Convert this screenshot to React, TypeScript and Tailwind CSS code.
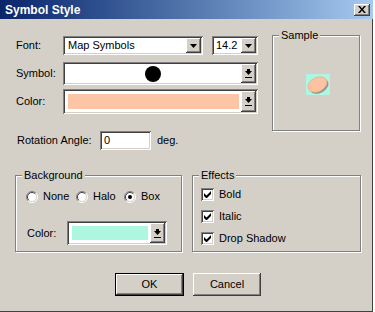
import type { ReactNode } from 'react'

const sunken = 'shadow-[inset_1px_1px_0_#808080,inset_-1px_-1px_0_#ffffff,inset_2px_2px_0_#404040,inset_-2px_-2px_0_#d4d0c8]'
const raised = 'shadow-[inset_-1px_-1px_0_#404040,inset_1px_1px_0_#ffffff,inset_-2px_-2px_0_#808080,inset_2px_2px_0_#d4d0c8]'
const etched = 'border border-[#808080] shadow-[inset_1px_1px_0_#ffffff,1px_1px_0_#ffffff]'

function DropButton({ bar = false }: { bar?: boolean }) {
  return (
    <div className={`flex h-full w-[15px] shrink-0 items-center justify-center bg-[#d4d0c8] ${raised}`}>
      {bar ? (
        <svg width="7" height="9" viewBox="0 0 7 9">
          <rect x="2" y="0" width="3" height="2" />
          <path d="M0 2h7L3.5 6z" />
          <rect x="0" y="8" width="7" height="1" />
        </svg>
      ) : (
        <svg width="7" height="4" viewBox="0 0 7 4">
          <path d="M0 0h7L3.5 4z" />
        </svg>
      )}
    </div>
  )
}

function ColorField({ color, width, height }: { color: string; width: string; height: string }) {
  return (
    <div className={`flex bg-white p-[2px] ${sunken} ${width} ${height}`}>
      <div className="flex-1 py-[3px] pl-[3px] pr-[2px]">
        <div className={`h-full ${color}`} />
      </div>
      <DropButton bar />
    </div>
  )
}

function Radio({ checked = false }: { checked?: boolean }) {
  return (
    <svg width="12" height="12" viewBox="0 0 12 12" className="shrink-0">
      <circle cx="6" cy="6" r="5" fill="#ffffff" />
      <path d="M2.1 9.9A5.5 5.5 0 0 1 9.9 2.1" fill="none" stroke="#808080" />
      <path d="M9.9 2.1A5.5 5.5 0 0 1 2.1 9.9" fill="none" stroke="#ffffff" />
      <path d="M2.8 9.2A4.5 4.5 0 0 1 9.2 2.8" fill="none" stroke="#404040" />
      <path d="M9.2 2.8A4.5 4.5 0 0 1 2.8 9.2" fill="none" stroke="#d4d0c8" />
      {checked && <circle cx="6" cy="6" r="2" fill="#000000" />}
    </svg>
  )
}

function Check({ label }: { label: string }) {
  return (
    <div className="flex h-[13px] items-center">
      <div className={`flex h-[13px] w-[13px] items-center justify-center bg-white ${sunken}`}>
        <svg width="7" height="7" viewBox="0 0 7 7">
          <path d="M0 2v3l2 2h1l4-4V0L2.5 4.5z" />
        </svg>
      </div>
      <span className="ml-[5px]">{label}</span>
    </div>
  )
}

function Group({ title, className, children }: { title: string; className: string; children: ReactNode }) {
  return (
    <fieldset className={`${etched} ${className}`}>
      <legend className="ml-[6px] bg-[#d4d0c8] px-[2px] leading-[13px]">{title}</legend>
      {children}
    </fieldset>
  )
}

function Button({ label, primary = false }: { label: string; primary?: boolean }) {
  return (
    <div className={`h-[23px] ${primary ? 'w-[69px] border border-black' : 'w-[68px]'}`}>
      <div className={`flex h-full items-center justify-center bg-[#d4d0c8] ${raised}`}>{label}</div>
    </div>
  )
}

export default function App() {
  return (
    <div className="h-[312px] w-[375px] bg-white">
      <div className="flex h-[312px] w-[373px] flex-col bg-[#d4d0c8] font-['Liberation_Sans',Arial,sans-serif] text-[11px] text-black shadow-[inset_-1px_-1px_0_#404040]">
        <div className="flex h-[19px] shrink-0 items-center bg-linear-to-r from-[#0a246a] to-[#a6caf0] pl-[5px] pr-[3px]">
          <span className="flex-1 text-[12px] font-bold text-white">Symbol Style</span>
          <div className={`flex h-[12px] w-[16px] items-center justify-center bg-[#d4d0c8] ${raised}`}>
            <svg width="8" height="7" viewBox="0 0 8 7">
              <path d="M0 0h2l2 2.5L6 0h2L5 3.5 8 7H6L4 4.5 2 7H0l3-3.5z" />
            </svg>
          </div>
        </div>

        <div className="flex flex-col pl-[15px] pt-[10px]">
          <div className="flex items-start">
            <div className="flex w-[244px] flex-col pl-[1px] pt-[7px]">
              <div className="flex h-[19px] items-center">
                <span className="w-[47px]">Font:</span>
                <div className={`flex h-[19px] w-[140px] bg-white p-[2px] ${sunken}`}>
                  <span className="flex-1 pl-[3px] leading-[15px]">Map Symbols</span>
                  <DropButton />
                </div>
                <div className={`ml-[9px] flex h-[19px] w-[46px] bg-white p-[2px] ${sunken}`}>
                  <span className="flex-1 pl-[2px] leading-[15px]">14.2</span>
                  <DropButton />
                </div>
              </div>

              <div className="mt-[7px] flex h-[23px] items-center">
                <span className="w-[47px]">Symbol:</span>
                <div className={`flex h-[23px] w-[195px] bg-white p-[2px] ${sunken}`}>
                  <div className="flex flex-1 items-center justify-center">
                    <div className="h-[16px] w-[16px] rounded-full bg-black" />
                  </div>
                  <DropButton bar />
                </div>
              </div>

              <div className="mt-[4px] flex h-[25px] items-center">
                <span className="w-[47px]">Color:</span>
                <ColorField color="bg-[#fcc6a6]" width="w-[195px]" height="h-[25px]" />
              </div>

              <div className="mt-[17px] flex h-[19px] items-center">
                <span className="w-[84px] pl-[1px]">Rotation Angle:</span>
                <div className={`flex h-[19px] w-[51px] items-center bg-white pl-[4px] ${sunken}`}>0</div>
                <span className="ml-[6px]">deg.</span>
              </div>
            </div>

            <Group title="Sample" className="ml-[13px] w-[88px]">
              <div className="flex h-[88px] items-center justify-center pb-[4px] pl-[3px]">
                <svg width="24" height="21" viewBox="0 0 24 21">
                  <rect width="24" height="21" fill="#aef5e2" />
                  <ellipse cx="13" cy="12" rx="10" ry="7" transform="rotate(-28 13 12)" fill="#9c948c" />
                  <ellipse cx="11.5" cy="10.5" rx="10" ry="7" transform="rotate(-28 11.5 10.5)" fill="#fbc3a2" stroke="#eaa888" strokeWidth="0.6" />
                </svg>
              </div>
            </Group>
          </div>

          <div className="mt-[19px] flex gap-[10px]">
            <Group title="Background" className="h-[83px] w-[167px]">
              <div className="mt-[8px] flex h-[13px] items-center pl-[10px]">
                <div className="flex w-[50px] items-center">
                  <Radio />
                  <span className="ml-[5px]">None</span>
                </div>
                <div className="flex w-[48px] items-center">
                  <Radio />
                  <span className="ml-[5px]">Halo</span>
                </div>
                <div className="flex items-center">
                  <Radio checked />
                  <span className="ml-[5px]">Box</span>
                </div>
              </div>
              <div className="mt-[18px] flex h-[24px] items-center pl-[11px]">
                <span className="w-[40px]">Color:</span>
                <ColorField color="bg-[#adf7e0]" width="w-[100px]" height="h-[24px]" />
              </div>
            </Group>

            <Group title="Effects" className="h-[83px] w-[169px]">
              <div className="mt-[6px] flex flex-col gap-[9px] pl-[8px]">
                <Check label="Bold" />
                <Check label="Italic" />
                <Check label="Drop Shadow" />
              </div>
            </Group>
          </div>

          <div className="mt-[21px] flex gap-[9px] pl-[100px]">
            <Button label="OK" primary />
            <Button label="Cancel" />
          </div>
        </div>
      </div>
    </div>
  )
}
